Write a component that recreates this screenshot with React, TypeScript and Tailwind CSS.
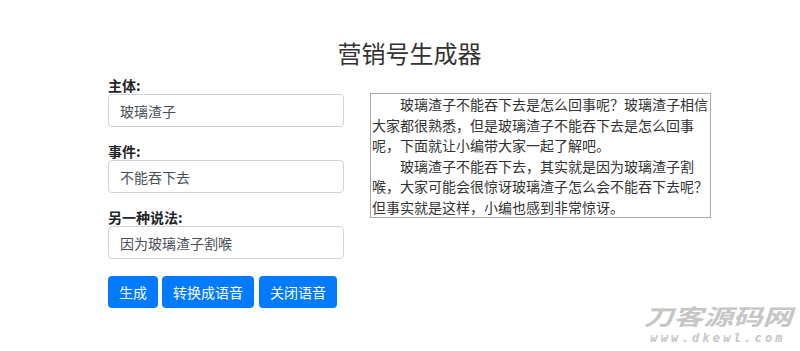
import React from 'react';

const font = { fontFamily: '"Noto Sans CJK SC", "Noto Sans", sans-serif' };

const Field: React.FC<{ label: string; value: string; last?: boolean }> = ({ label, value, last }) => (
  <div className={last ? '' : 'mb-[14px]'}>
    <label className="block text-[14px] leading-[20px] font-bold text-[#212529]">{label}</label>
    <input
      readOnly
      value={value}
      className="mt-[-1px] block w-full h-[33px] px-[11px] text-[14px] text-[#495057] bg-white border border-[#ced4da] rounded-[4px] outline-none"
      style={font}
    />
  </div>
);

const App: React.FC = () => {
  return (
    <div className="relative w-[800px] h-[351px] bg-white overflow-hidden" style={font}>
      <div className="w-[603px] ml-[108px] pt-[38px]">
        <h1 className="text-center text-[24px] leading-[30px] font-normal text-[#333]">营销号生成器</h1>

        <div className="flex gap-[26px] mt-[7px]">
          <div className="w-[236px]">
            <Field label="主体:" value="玻璃渣子" />
            <Field label="事件:" value="不能吞下去" />
            <Field label="另一种说法:" value="因为玻璃渣子割喉" last />
            <div className="flex gap-[4px] mt-[17px]">
              {['生成', '转换成语音', '关闭语音'].map((b, i) => (
                <button
                  key={b}
                  className={`h-[32px] px-[11px] bg-[#007bff] text-white text-[14px] rounded-[4px] ${i === 2 ? 'ml-[1px]' : ''}`}
                  style={font}
                >
                  {b}
                </button>
              ))}
            </div>
          </div>

          <div className="w-[341px] h-[125px] mt-[18px] border border-[#a9a9a9] px-[1px] text-[14px] leading-[20.5px] text-[#333]">
            <p className="indent-[2em]">
              玻璃渣子不能吞下去是怎么回事呢？玻璃渣子相信大家都很熟悉，但是玻璃渣子不能吞下去是怎么回事呢，下面就让小编带大家一起了解吧。
            </p>
            <p className="indent-[2em]">
              玻璃渣子不能吞下去，其实就是因为玻璃渣子割喉，大家可能会很惊讶玻璃渣子怎么会不能吞下去呢？但事实就是这样，小编也感到非常惊讶。
            </p>
          </div>
        </div>
      </div>

      {/* watermark */}
      <div className="absolute left-[640px] top-[305px] w-[156px] flex flex-col items-center pointer-events-none select-none text-[#c6c6c6]">
        <div
          className="h-[25px] text-[22px] leading-[25px] font-bold italic scale-x-[1.35]"
          style={{ fontFamily: '"Liberation Sans", "Noto Sans CJK SC", sans-serif' }}
        >
          刀客源码网
        </div>
        <div
          className="mt-[1px] text-[12px] leading-[14px] font-bold italic tracking-[3.2px]"
          style={{ fontFamily: '"DejaVu Sans Mono", monospace' }}
        >
          www.dkewl.com
        </div>
      </div>
    </div>
  );
};

export default App;
